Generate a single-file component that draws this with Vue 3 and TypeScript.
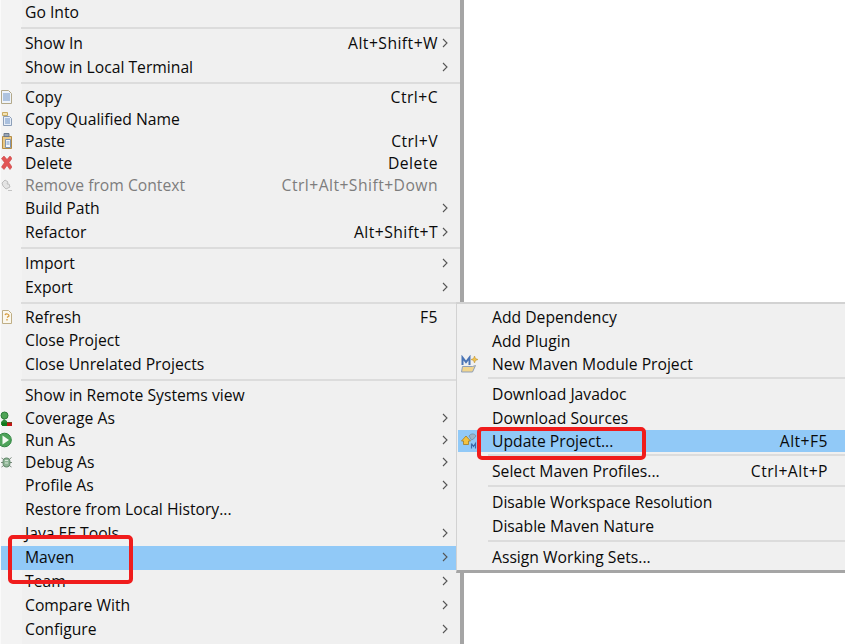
<template>
  <div class="stage">
    <ul class="menu">
      <template v-for="(item, i) in mainItems" :key="i">
        <li v-if="item.sep" class="sep"></li>
        <li v-else class="row" :class="{ short: item.icon, active: item.active, off: item.off }">
          <span class="icon-cell">
            <svg v-if="item.icon === 'copy'" width="16" height="16" viewBox="0 0 16 16">
              <path d="M5.5 1.500h7l3 3v10h-10z" fill="#eef3fa" stroke="#b3a98a" />
              <path d="M7 5h7M7 7h7M7 9h7M7 11h7" stroke="#6f93c4" />
            </svg>
            <svg v-else-if="item.icon === 'qualified'" width="16" height="16" viewBox="0 0 16 16">
              <path d="M6.5 1.500h5v3h-5z" fill="#f4e3b4" stroke="#c9ab62" />
              <path d="M7.500 5.500h6l2 2v7h-8z" fill="#e6edf7" stroke="#8c9fb8" />
              <path d="M9 8h5M9 10h5M9 12h5" stroke="#6f93c4" />
            </svg>
            <svg v-else-if="item.icon === 'paste'" width="16" height="16" viewBox="0 0 16 16">
              <path d="M6.500 3.500h9v12h-9z" fill="#e9c988" stroke="#b58d45" />
              <path d="M8 0.500h5v3h-5z" fill="#9aa6b5" stroke="#6d7a8b" />
              <path d="M9.500 6.500h5v8h-5z" fill="#f4f7fb" stroke="#7f93ad" />
              <path d="M10.500 9h3M10.500 11h3" stroke="#6f93c4" />
            </svg>
            <svg v-else-if="item.icon === 'delete'" width="16" height="16" viewBox="0 0 16 16">
              <path d="M5.500 3.500 8 1 11 4.500 14 1 16 3.500 13 7.500 16 12 14 14.500 11 10.500 8 14.500 5.500 12 8.500 7.500z" fill="#e25555" stroke="#c94545" stroke-width=".6" />
            </svg>
            <svg v-else-if="item.icon === 'remove'" width="16" height="16" viewBox="0 0 16 16">
              <path d="M6 6l3-3 3 2-1 2h2l1 3-4 2-3-3z" fill="#e4e4e4" stroke="#bdbdbd" />
              <path d="M12 13.500h4" stroke="#c4c4c4" />
            </svg>
            <svg v-else-if="item.icon === 'refresh'" width="16" height="16" viewBox="0 0 16 16">
              <path d="M6.500 1.500h6l3 3v10h-9z" fill="#fbf8ee" stroke="#bfae85" />
              <path d="M9 6c1-2 4-1 4 1l-2 1.500M11 10v1.500" fill="none" stroke="#d59a3c" stroke-width="1.300" />
            </svg>
            <svg v-else-if="item.icon === 'coverage'" width="16" height="16" viewBox="0 0 16 16">
              <circle cx="8.500" cy="5.500" r="3.500" fill="#4fa456" stroke="#2d7c39" />
              <path d="M5 15v-3l3-3 3 2v1h5v3z" fill="#2f8a3c" />
              <path d="M6 12.500h10V16H6z" fill="#127a1c" />
              <path d="M11 12.500h5V16h-5z" fill="#c01616" />
            </svg>
            <svg v-else-if="item.icon === 'run'" width="16" height="16" viewBox="0 0 16 16">
              <circle cx="8.500" cy="8" r="6.800" fill="#4ea35a" stroke="#2f8540" />
              <path d="M6.500 3.500 13 8l-6.500 4.500z" fill="#f4fbf3" />
            </svg>
            <svg v-else-if="item.icon === 'debug'" width="16" height="16" viewBox="0 0 16 16">
              <path d="M5.500 4l3 2M15.500 3.500l-3 2.500M5 8.500h3M13 8.500h3M5.500 13l3-2M15.500 13l-3-2" stroke="#7c8a7e" />
              <ellipse cx="10.500" cy="8.500" rx="3.500" ry="4.500" fill="#8fb596" stroke="#5c8465" />
              <path d="M9 6.500h3M9 9h3" stroke="#d9e7da" />
            </svg>
          </span>
          <span class="label">{{ item.label }}</span>
          <span class="keys">{{ item.keys }}</span>
          <svg class="arrow" width="6" height="10" viewBox="0 0 6 10">
            <path v-if="item.more" d="M1 1l4 4-4 4" fill="none" stroke="#555" stroke-width="1.100" />
          </svg>
        </li>
      </template>
    </ul>

    <ul class="menu sub">
      <template v-for="(item, i) in subItems" :key="i">
        <li v-if="item.sep" class="sep"></li>
        <li v-else class="row" :class="{ short: item.icon, active: item.active }">
          <span class="icon-cell">
            <svg v-if="item.icon === 'module'" width="18" height="18" viewBox="0 0 18 18">
              <path d="M1.500 11.500h10l3-1-3 6.500h-11z" fill="#f1d58d" stroke="#8f9fb8" />
              <path d="M1.500 10V2.500L5 7l3.500-4.500V10" fill="none" stroke="#4a74b5" stroke-width="2" />
              <path d="M13.500 1l1 2.500 2.500 1-2.500 1-1 2.500-1-2.500L10 4.500l2.500-1z" fill="#f0c14c" stroke="#b98d2a" stroke-width=".5" />
            </svg>
            <svg v-else-if="item.icon === 'update'" width="18" height="18" viewBox="0 0 18 18">
              <path d="M0.500 9 5 4l4.500 5H7.500v3.500h-5V9z" fill="#f3c23f" stroke="#a57c1f" stroke-width=".8" />
              <path d="M8 4c2-3 6-2.500 7 0l-2.500 3-2 1z" fill="#9db4c7" stroke="#6e8799" stroke-width=".7" />
              <path d="M10.500 11.500v5M10.500 11.500l2 3 2-3v5" fill="none" stroke="#3d69a8" stroke-width="1.200" />
            </svg>
          </span>
          <span class="label">{{ item.label }}</span>
          <span class="keys">{{ item.keys }}</span>
        </li>
      </template>
    </ul>

    <div class="mark mark-maven"></div>
    <div class="mark mark-update"></div>
  </div>
</template>

<script setup lang="ts">
interface MenuItem {
  label?: string
  keys?: string
  icon?: string
  more?: boolean
  active?: boolean
  off?: boolean
  sep?: boolean
}

const mainItems: MenuItem[] = [
  { label: 'Go Into' },
  { sep: true },
  { label: 'Show In', keys: 'Alt+Shift+W', more: true },
  { label: 'Show in Local Terminal', more: true },
  { sep: true },
  { label: 'Copy', keys: 'Ctrl+C', icon: 'copy' },
  { label: 'Copy Qualified Name', icon: 'qualified' },
  { label: 'Paste', keys: 'Ctrl+V', icon: 'paste' },
  { label: 'Delete', keys: 'Delete', icon: 'delete' },
  { label: 'Remove from Context', keys: 'Ctrl+Alt+Shift+Down', icon: 'remove', off: true },
  { label: 'Build Path', more: true },
  { label: 'Refactor', keys: 'Alt+Shift+T', more: true },
  { sep: true },
  { label: 'Import', more: true },
  { label: 'Export', more: true },
  { sep: true },
  { label: 'Refresh', keys: 'F5', icon: 'refresh' },
  { label: 'Close Project' },
  { label: 'Close Unrelated Projects' },
  { sep: true },
  { label: 'Show in Remote Systems view' },
  { label: 'Coverage As', icon: 'coverage', more: true },
  { label: 'Run As', icon: 'run', more: true },
  { label: 'Debug As', icon: 'debug', more: true },
  { label: 'Profile As', more: true },
  { label: 'Restore from Local History...' },
  { label: 'Java EE Tools', more: true },
  { label: 'Maven', more: true, active: true },
  { label: 'Team', more: true },
  { label: 'Compare With', more: true },
  { label: 'Configure', more: true },
]

const subItems: MenuItem[] = [
  { label: 'Add Dependency' },
  { label: 'Add Plugin' },
  { label: 'New Maven Module Project', icon: 'module' },
  { sep: true },
  { label: 'Download Javadoc' },
  { label: 'Download Sources' },
  { label: 'Update Project...', keys: 'Alt+F5', icon: 'update', active: true },
  { sep: true },
  { label: 'Select Maven Profiles...', keys: 'Ctrl+Alt+P' },
  { sep: true },
  { label: 'Disable Workspace Resolution' },
  { label: 'Disable Maven Nature' },
  { sep: true },
  { label: 'Assign Working Sets...' },
]
</script>

<style scoped>
.stage {
  position: relative;
  width: 845px;
  height: 644px;
  overflow: hidden;
  background: #fff;
  font-family: "Open Sans", "Noto Sans", sans-serif;
  font-size: 15.7px;
  color: #0a0a0a;
}

ul {
  list-style: none;
  margin: 0;
  padding: 0;
}

.menu {
  width: 464px;
  height: 644px;
  padding: 1px 0 0 0;
  box-sizing: border-box;
  background: linear-gradient(90deg, #f3f3f3 21px, #f0f0f0 21px);
  border-left: 1px solid #fafafa;
  border-right: 4px solid #a5a5a5;
}

.row {
  display: flex;
  align-items: center;
  height: 24px;
  padding-bottom: 2px;
  box-sizing: border-box;
  white-space: nowrap;
}

.row.short {
  height: 22px;
}

.row.active {
  background: #91c9f7;
}

.row.off {
  color: #7d7d7d;
}

.sep {
  height: 2px;
  margin: 2px 0 3px 20px;
  background: #dcdcdc;
}

.icon-cell {
  display: flex;
  justify-content: flex-end;
  flex: none;
  width: 24px;
  padding-right: 13px;
  box-sizing: border-box;
}

.icon-cell svg {
  flex: none;
}

.label {
  flex: 1;
}

.keys {
  margin-right: 4px;
  letter-spacing: 0.45px;
}

.arrow {
  flex: none;
  margin-right: 12px;
}

.sub {
  position: absolute;
  left: 456px;
  top: 302px;
  width: 389px;
  height: 265px;
  padding: 1px 0 0 1px;
  background: #f0f0f0;
  border: 0;
  border-top: 2px solid #d2d2d2;
  border-left: 1px solid #d2d2d2;
  border-bottom: 3px solid #a5a5a5;
  box-sizing: content-box;
}

.sub .row {
  padding-bottom: 0;
}

.sub .sep {
  margin-left: 30px;
}

.sub .icon-cell {
  width: 34px;
  padding-right: 13px;
}

.sub .keys {
  margin-right: 19px;
}

.mark {
  position: absolute;
  border: 4px solid #f01c1c;
  border-radius: 5px;
  box-sizing: border-box;
}

.mark-maven {
  left: 8px;
  top: 535px;
  width: 125px;
  height: 49px;
}

.mark-update {
  left: 477px;
  top: 427px;
  width: 169px;
  height: 33px;
}
</style>

<style>
html,
body {
  margin: 0;
  background: #fff;
}
</style>
